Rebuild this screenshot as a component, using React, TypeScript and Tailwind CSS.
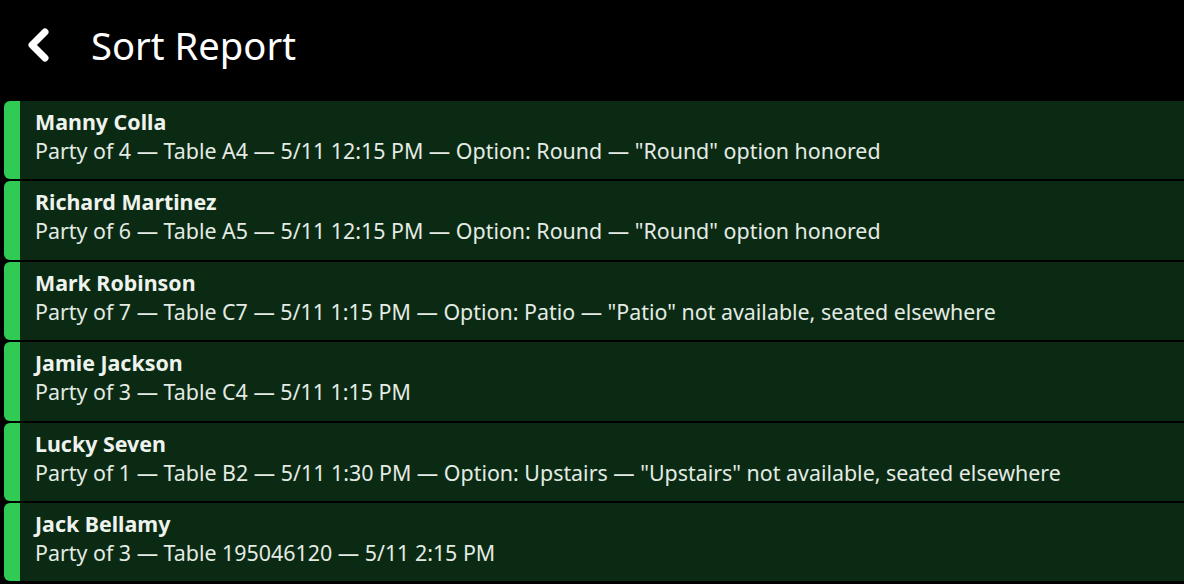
type Seating = {
  name: string;
  detail: string;
};

const seatings: Seating[] = [
  {
    name: "Manny Colla",
    detail: 'Party of 4 — Table A4 — 5/11 12:15 PM — Option: Round — "Round" option honored',
  },
  {
    name: "Richard Martinez",
    detail: 'Party of 6 — Table A5 — 5/11 12:15 PM — Option: Round — "Round" option honored',
  },
  {
    name: "Mark Robinson",
    detail:
      'Party of 7 — Table C7 — 5/11 1:15 PM — Option: Patio — "Patio" not available, seated elsewhere',
  },
  {
    name: "Jamie Jackson",
    detail: "Party of 3 — Table C4 — 5/11 1:15 PM",
  },
  {
    name: "Lucky Seven",
    detail:
      'Party of 1 — Table B2 — 5/11 1:30 PM — Option: Upstairs — "Upstairs" not available, seated elsewhere',
  },
  {
    name: "Jack Bellamy",
    detail: "Party of 3 — Table 195046120 — 5/11 2:15 PM",
  },
];

function BackChevron() {
  return (
    <svg width="26" height="36" viewBox="0 0 26 36" fill="none" className="shrink-0">
      <polyline
        points="20,5 7,18 20,31"
        stroke="white"
        strokeWidth={7}
        strokeLinecap="round"
        strokeLinejoin="round"
      />
    </svg>
  );
}

function ReportRow({ item }: { item: Seating }) {
  return (
    <div className="flex h-[78.4px] rounded-l-md overflow-hidden bg-[#0b2a13]">
      <div className="w-4 shrink-0 bg-[#2fcb55]" />
      <div className="flex flex-col pl-[15px] pt-[6px]">
        <div className="text-[21.4px] leading-[29px] font-bold text-[#eef3ee]">{item.name}</div>
        <div className="text-[21.4px] leading-[30px] text-[#e4ebe4] whitespace-nowrap">
          {item.detail}
        </div>
      </div>
    </div>
  );
}

export default function App() {
  return (
    <div
      className="w-[1184px] h-[584px] overflow-hidden bg-black text-white"
      style={{ fontFamily: '"Noto Sans", "Open Sans", sans-serif' }}
    >
      <header className="h-[101px] flex items-center pl-[25px] pb-[11px]">
        <BackChevron />
        <h1 className="ml-[40px] text-[38.2px] font-normal leading-none">Sort Report</h1>
      </header>
      <div className="flex flex-col gap-[2px] pl-1">
        {seatings.map((s) => (
          <ReportRow key={s.name} item={s} />
        ))}
      </div>
    </div>
  );
}
